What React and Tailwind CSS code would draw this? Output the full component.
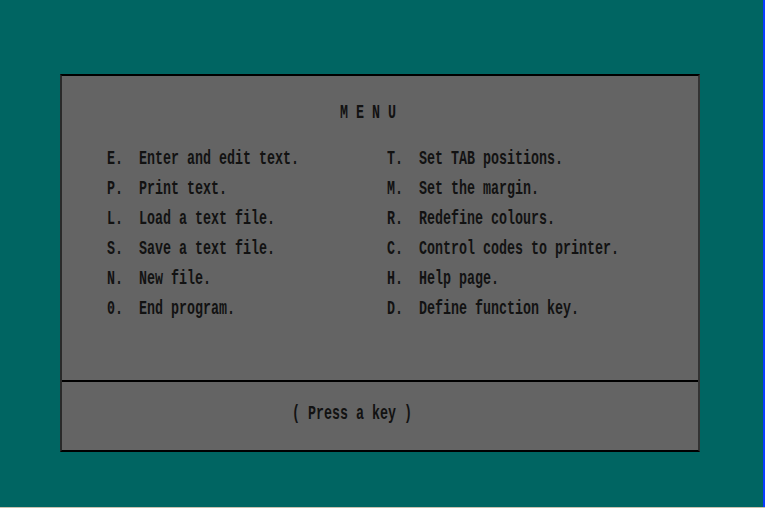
import React from "react";

const left = [
  ["E.", "Enter and edit text."],
  ["P.", "Print text."],
  ["L.", "Load a text file."],
  ["S.", "Save a text file."],
  ["N.", "New file."],
  ["0.", "End program."],
];
const right = [
  ["T.", "Set TAB positions."],
  ["M.", "Set the margin."],
  ["R.", "Redefine colours."],
  ["C.", "Control codes to printer."],
  ["H.", "Help page."],
  ["D.", "Define function key."],
];

const mono = { fontFamily: '"Liberation Mono", "DejaVu Sans Mono", monospace' };

function Item({ k, t }) {
  return (
    <div className="h-[30px] flex items-center">
      <span className="inline-block scale-y-150 whitespace-pre font-bold text-[13.33px] leading-none text-[#121212]">
        {k + "  " + t}
      </span>
    </div>
  );
}

export default function App() {
  return (
    <div className="w-[765px] h-[508px] flex flex-col overflow-hidden" style={mono}>
      <div className="flex flex-1">
        <div className="flex-1 bg-[#006562] pt-[74px] pl-[60px]">
          <div className="w-[640px] h-[378px] bg-[#646464] border-t-2 border-b-2 border-l-2 border-r-2 border-t-black border-b-black border-l-[#2a2a2a] border-r-[#333] flex flex-col">
            <div className="h-[306px] border-b-2 border-black pt-[22px]">
              <div className="h-[30px] flex items-center pl-[278px]">
                <span className="inline-block scale-y-150 whitespace-pre font-bold text-[13.33px] leading-none text-[#121212]">
                  M E N U
                </span>
              </div>
              <div className="mt-[16px] pl-[45px] grid grid-cols-[280px_1fr]">
                <div className="flex flex-col">
                  {left.map(([k, t]) => (
                    <Item key={k} k={k} t={t} />
                  ))}
                </div>
                <div className="flex flex-col">
                  {right.map(([k, t]) => (
                    <Item key={k} k={k} t={t} />
                  ))}
                </div>
              </div>
            </div>
            <div className="flex-1 flex items-center pl-[230px] pb-[4px]">
              <span className="inline-block scale-y-150 whitespace-pre font-bold text-[13.33px] leading-none text-[#121212]">
                ( Press a key )
              </span>
            </div>
          </div>
        </div>
        <div className="w-[2px] bg-[#0a3cff]" />
      </div>
      <div className="h-[1px] bg-[#c8c2b0]" />
    </div>
  );
}
